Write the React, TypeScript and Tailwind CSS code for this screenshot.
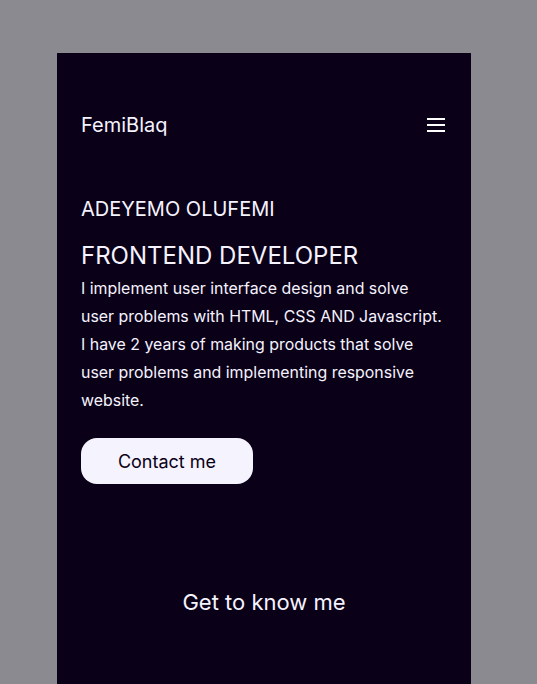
export default function App() {
  return (
    <div className="min-h-screen bg-[#8b8a91] pt-[53px]" style={{ fontFamily: "Inter, 'Noto Sans', sans-serif" }}>
      <div className="ml-[57px] w-[414px] min-h-[631px] bg-[#0a0018] px-6 text-[#f5f3fe]">
        {/* Header */}
        <header className="flex items-center justify-between pt-[58px]">
          <span className="text-[20px] leading-7">FemiBlaq</span>
          <button aria-label="Open menu" className="mr-[2px] flex flex-col gap-[4px]">
            <span className="block h-[2px] w-[18px] bg-white" />
            <span className="block h-[2px] w-[18px] bg-white" />
            <span className="block h-[2px] w-[18px] bg-white" />
          </button>
        </header>

        {/* Hero */}
        <section className="pt-[56px]">
          <h2 className="text-[20px] leading-7">ADEYEMO OLUFEMI</h2>
          <h1 className="mt-[17px] text-[24px] leading-8">FRONTEND DEVELOPER</h1>
          <p className="mt-[3px] text-[15.92px] leading-[28px]">
            I implement user interface design and solve
            <br />
            user problems with HTML, CSS AND Javascript.
            <br />
            I have 2 years of making products that solve
            <br />
            user problems and implementing responsive
            <br />
            website.
          </p>
          <button className="mt-[23px] h-[46px] w-[172px] rounded-2xl bg-[#f5f3fe] text-[18px] text-[#0a0018]">
            Contact me
          </button>
        </section>

        <section className="pt-[102px] text-center">
          <h3 className="text-[22px] leading-8">Get to know me</h3>
        </section>
      </div>
    </div>
  );
}
